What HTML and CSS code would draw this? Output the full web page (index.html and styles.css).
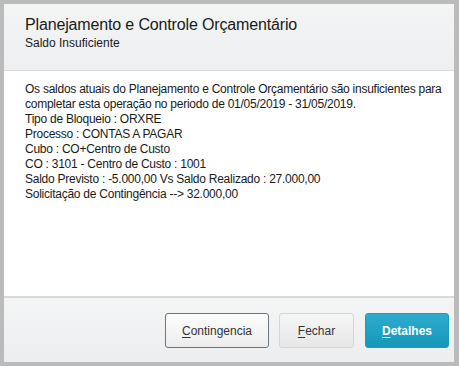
FILE: index.html
```html
<!DOCTYPE html>
<html lang="pt-BR">
  <head>
    <meta charset="UTF-8" />
    <meta name="viewport" content="width=device-width, initial-scale=1.0" />
    <title>Saldo Insuficiente</title>
    <link rel="stylesheet" href="styles.css">
  </head>

  <body>
    <div class="dialog">
      <div class="dialog-header">
        <div class="dialog-title">Planejamento e Controle Orçamentário</div>
        <div class="dialog-subtitle">Saldo Insuficiente</div>
      </div>
      <div class="dialog-body">
        <p>Os saldos atuais do Planejamento e Controle Orçamentário são insuficientes para completar esta operação no periodo de 01/05/2019 - 31/05/2019.</p>
        <p>Tipo de Bloqueio : ORXRE</p>
        <p>Processo : CONTAS A PAGAR</p>
        <p>Cubo : CO+Centro de Custo</p>
        <p>CO : 3101 - Centro de Custo : 1001</p>
        <p>Saldo Previsto : -5.000,00 Vs Saldo Realizado : 27.000,00</p>
        <p>Solicitação de Contingência --&gt; 32.000,00</p>
      </div>
      <div class="dialog-footer">
        <button class="btn btn-outline"><u>C</u>ontingencia</button>
        <button class="btn btn-default"><u>F</u>echar</button>
        <button class="btn btn-primary"><u>D</u>etalhes</button>
      </div>
    </div>
  </body>
</html>
```

FILE: styles.css
```css
html {
  background: #bbbbbb;
}

body {
  margin: 0;
  padding: 4px 5px 4px 4px;
  font-family: "Liberation Sans", Arial, sans-serif;
  color: #222;
}

.dialog {
  height: 358px;
  display: flex;
  flex-direction: column;
  background: #fff;
}

.dialog-header {
  height: 67px;
  box-sizing: border-box;
  padding: 11px 21px 0;
  background: linear-gradient(#f3f4f4, #eeeff1);
  border-bottom: 1px solid #d9dadb;
}

.dialog-title {
  font-size: 16px;
  line-height: 19px;
  letter-spacing: -0.15px;
  color: #1a1a1a;
  margin-bottom: 2px;
}

.dialog-subtitle {
  font-size: 12px;
  line-height: 15px;
  color: #1a1a1a;
}

.dialog-body {
  flex: 1;
  padding: 11px 0 0 21px;
  font-size: 12px;
  line-height: 15px;
  letter-spacing: -0.25px;
  color: #1a1a1a;
}

.dialog-body p {
  margin: 0;
}

.dialog-footer {
  height: 66px;
  box-sizing: border-box;
  display: flex;
  justify-content: flex-end;
  gap: 10px;
  padding: 15px 5px 0;
  background: linear-gradient(#f3f4f4, #edeef0);
  border-top: 2px solid #d8d9da;
}

.btn {
  height: 35px;
  font-family: "Liberation Sans", Arial, sans-serif;
  font-size: 12px;
  border-radius: 3px;
  cursor: pointer;
}

.btn u {
  text-underline-offset: 2px;
}

.btn-outline {
  width: 104px;
  color: #333;
  background: linear-gradient(#fdfdfd, #ececec);
  border: 1px solid #6e7482;
}

.btn-default {
  width: 75px;
  color: #333;
  background: linear-gradient(#f6f6f6, #e7e7e7);
  border: 1px solid #d6d6d6;
}

.btn-primary {
  width: 84px;
  margin-left: 1px;
  color: #fff;
  font-weight: bold;
  background: linear-gradient(#2eaccd, #1597b9);
  border: 1px solid #1c9cbf;
}
```
